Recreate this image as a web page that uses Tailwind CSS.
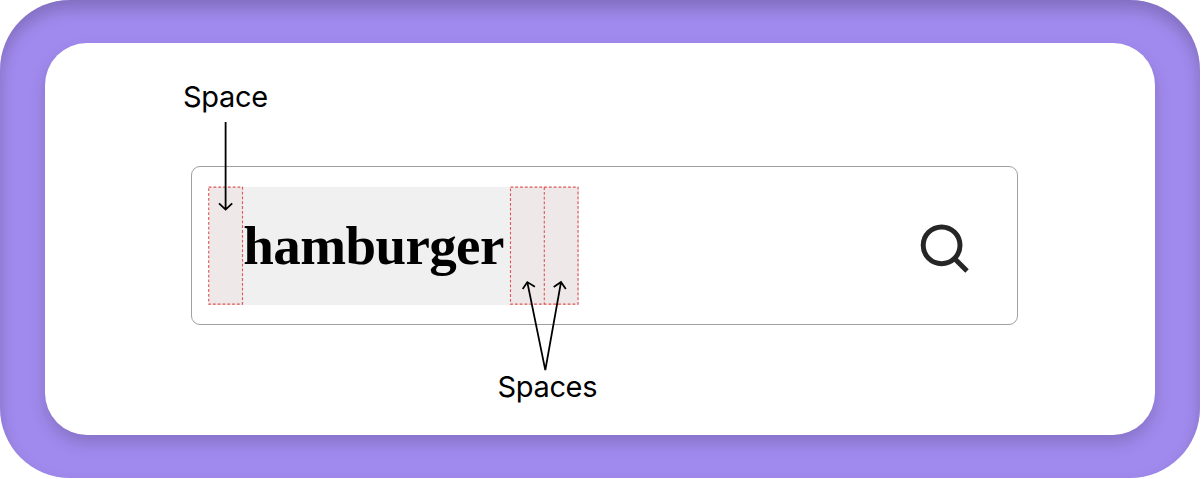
<!DOCTYPE html>
<html lang="en">
<head>
<meta charset="utf-8">
<title>Spaces in a search query</title>
<script src="https://cdn.jsdelivr.net/npm/@tailwindcss/browser@4"></script>
</head>
<body class="bg-white overflow-hidden">
<main class="h-[477.5px] w-[1200px] rounded-[70px] bg-[#a18aee] px-[45px] pt-[42.5px] shadow-[inset_0_9px_16px_rgba(0,0,0,0.2)]">
  <section class="relative flex h-[392.5px] flex-col rounded-[42px] bg-white pt-[36px] pl-[146px] text-black shadow-[0_8px_16px_rgba(0,0,0,0.17)]">
    <p class="-ml-[8px] h-[87.3px] font-['Inter',sans-serif] text-[29px] leading-[36px] tracking-[-0.3px]">Space</p>
    <div class="flex h-[159.5px] w-[826.5px] items-center justify-between rounded-[9px] border border-[#a0a0a0] pr-[47.5px] pl-[16.5px]">
      <div class="flex h-[118px] w-[370px] items-center bg-[#f0f0f0]">
        <span class="h-full w-[34px] shrink-0 bg-[#efe8e8]"></span>
        <span class="w-[268px] shrink-0 pt-px pl-[0.8px] font-['Liberation_Serif',serif] text-[55px] leading-[64px] font-bold tracking-[-0.6px]">hamburger</span>
        <span class="h-full w-[68px] shrink-0 bg-[#efe8e8]"></span>
      </div>
      <svg class="mt-[4px] h-[50px] w-[50px]" viewBox="0 0 50 50" fill="none" stroke="#262626" stroke-width="5" aria-label="Search">
        <circle cx="22.6" cy="22.3" r="18.4"/>
        <path d="M35.2 35.3L48 48"/>
      </svg>
    </div>
    <p class="mt-[43.7px] ml-[306.5px] font-['Inter',sans-serif] text-[29px] leading-[36px] tracking-[-0.35px]">Spaces</p>
    <svg class="absolute inset-0 h-full w-full" viewBox="45 42.9 1110 392.5" fill="none" aria-hidden="true">
      <g stroke="#e05555" stroke-width="1.1" stroke-dasharray="2.8 2">
        <rect x="208.7" y="187" width="33.8" height="117"/>
        <rect x="510.5" y="187" width="67.5" height="117"/>
        <path d="M544.3 187V304"/>
      </g>
      <g stroke="#000" stroke-width="1.8">
        <path d="M225.6 122V209.5M219 203.2L225.6 209.5L232.2 203.2"/>
        <path d="M527.3 282L545.3 370L561 282M522.7 288.8L527.3 282L534.9 286.6M553.7 286.9L561 282L565.8 288.8"/>
      </g>
    </svg>
  </section>
</main>
</body>
</html>
